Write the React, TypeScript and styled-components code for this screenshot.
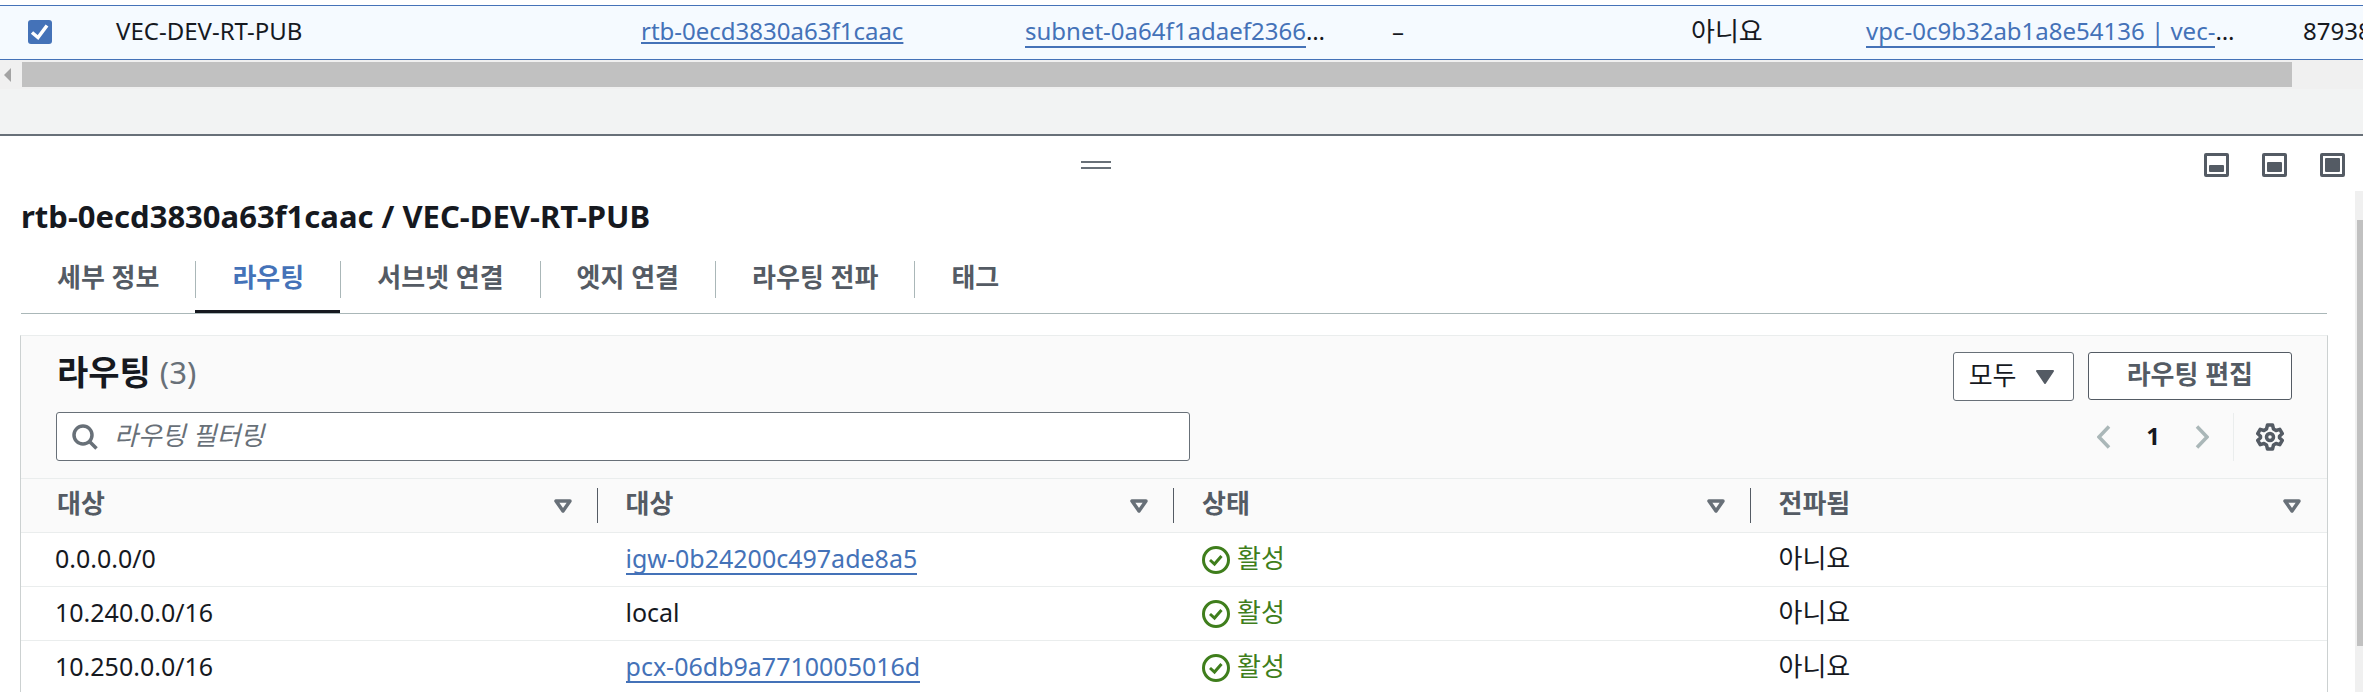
import React from 'react';
import styled, { createGlobalStyle } from 'styled-components';

const Global = createGlobalStyle`
  *, *::before, *::after { box-sizing: border-box; }
  html, body { margin: 0; overflow: hidden; }
  body, button, input, select {
    font-family: 'Noto Sans', 'Noto Sans CJK KR', sans-serif;
    font-size: 26px;
    line-height: 36px;
    color: #16191f;
  }
`;

const Page = styled.div`
  display: flex;
  flex-direction: column;
  height: 100vh;
  overflow: hidden;
  background: #f2f3f3;
`;

const ListPane = styled.section`
  flex: none;
  height: 134px;
  overflow: hidden;
  padding-top: 5px;
  background: linear-gradient(#fff 5px, #f2f3f3 5px);
`;

const ListTable = styled.table`
  width: 120%;
  table-layout: fixed;
  border-collapse: collapse;
  background: #f5faff;
`;

const ListCell = styled.td<{ $w?: number; $korean?: boolean }>`
  width: ${(p) => (p.$w ? `${p.$w}px` : 'auto')};
  height: 54px;
  padding: 0 0 4px;
  border: solid #4472b8;
  border-width: 1px 0;
  font-size: ${(p) => (p.$korean ? 26 : 24)}px;
  white-space: nowrap;
`;

const Check = styled.input`
  appearance: none;
  display: block;
  width: 24px;
  height: 24px;
  margin: 3px 0 0 28px;
  border-radius: 3px;
  background: #4472b8
    url("data:image/svg+xml,%3Csvg xmlns='http://www.w3.org/2000/svg' viewBox='0 0 24 24'%3E%3Cpath d='M4 12.500l6 5L19 5.500' fill='none' stroke='white' stroke-width='3.500'/%3E%3C/svg%3E");
`;

const Link = styled.a<{ $boxed?: boolean }>`
  display: inline-block;
  line-height: 30px;
  color: #4472b8;
  text-decoration: ${(p) => (p.$boxed ? 'none' : 'underline')};
  text-decoration-thickness: 2px;
  text-underline-offset: 2px;
  border-bottom: ${(p) => (p.$boxed ? '2px solid #4472b8' : '0')};
`;

const HScroll = styled.div`
  display: flex;
  align-items: center;
  height: 29px;
  padding: 0 71px 0 4px;
  gap: 11px;
  background: #f0f0f0;
`;

const HThumb = styled.div`
  flex: 1;
  height: 25px;
  background: #c1c1c1;
`;

const Split = styled.section`
  flex: 1;
  min-height: 0;
  display: flex;
  flex-direction: column;
  border-top: 2px solid #687078;
  background: #fff;
`;

const SplitBar = styled.div`
  flex: none;
  display: grid;
  grid-template-columns: 1fr auto 1fr;
  align-items: center;
  height: 55px;
  padding: 3px 18px 0 0;
`;

const Handle = styled.button`
  grid-column: 2;
  width: 30px;
  height: 8px;
  margin-right: 154px;
  padding: 0;
  border: solid #687078;
  border-width: 2px 0;
  background: none;
`;

const SizeButtons = styled.div`
  display: flex;
  justify-content: flex-end;
  gap: 33px;
`;

const IconButton = styled.button`
  display: flex;
  padding: 0;
  border: 0;
  background: none;
`;

const Body = styled.div`
  flex: 1;
  min-height: 0;
  display: flex;
`;

const Content = styled.div`
  flex: 1;
  min-width: 0;
  overflow: hidden;
  padding: 4px 27px 0 20px;
`;

const VScroll = styled.div`
  flex: none;
  width: 8px;
  padding: 29px 0 46px 2px;
  background: #f0f0f0;
`;

const VThumb = styled.div`
  height: 100%;
  background: #c1c1c1;
`;

const Title = styled.h1`
  margin: 0 0 0 1px;
  font-size: 31px;
  line-height: 42px;
  font-weight: 700;
`;

const Tabs = styled.div`
  display: flex;
  height: 77px;
  margin: 0 1px;
  padding-top: 14px;
  border-bottom: 1px solid #aab7b8;
`;

const Tab = styled.button<{ $active?: boolean }>`
  display: flex;
  align-items: flex-start;
  height: 62px;
  padding: 0;
  border: 0;
  border-bottom: 3px solid ${(p) => (p.$active ? '#16191f' : 'transparent')};
  background: none;
  color: ${(p) => (p.$active ? '#4472b8' : '#545b64')};
  font-weight: 700;
  span {
    height: 37px;
    margin-top: 10px;
    padding: 0 36px;
    line-height: 32px;
    white-space: nowrap;
  }
  &:not(:first-child) span { border-left: 1px solid #aab7b8; }
`;

const Card = styled.section`
  margin-top: 21px;
  border: 1px solid #ccd1d1;
  border-top-color: #eaeded;
  background: #fafafa;
`;

const CardTop = styled.div`
  display: flex;
  justify-content: space-between;
  align-items: flex-start;
  height: 76px;
  padding: 16px 35px 0 36px;
`;

const CardTitle = styled.h2`
  display: flex;
  gap: 9px;
  margin: 0;
  font-size: 34px;
  line-height: 40px;
  font-weight: 700;
  span { color: #687078; font-weight: 400; font-size: 31px; }
`;

const Actions = styled.div`
  display: flex;
  gap: 14px;
`;

const SelectWrap = styled.label`
  display: flex;
  align-items: center;
  width: 121px;
  height: 49px;
  padding: 0 19px 0 15px;
  border: 1px solid #687078;
  border-radius: 3px;
  background: #fff;
`;

const Select = styled.select`
  appearance: none;
  flex: 1;
  min-width: 0;
  padding: 0 0 4px;
  border: 0;
  background: none;
`;

const EditButton = styled.button`
  height: 48px;
  padding: 0 38px 5px;
  border: 1px solid #545b64;
  border-radius: 3px;
  background: #fff;
  color: #545b64;
  font-weight: 700;
`;

const FilterRow = styled.div`
  display: flex;
  justify-content: space-between;
  height: 66px;
  padding: 0 43px 17px 35px;
`;

const Search = styled.label`
  display: flex;
  align-items: center;
  gap: 16px;
  width: calc(51% - 2px);
  padding-left: 15px;
  border: 1px solid #687078;
  border-radius: 3px;
  background: #fff;
`;

const SearchInput = styled.input`
  flex: 1;
  min-width: 0;
  padding: 0 0 4px;
  border: 0;
  background: none;
  &::placeholder { color: #687078; font-style: italic; opacity: 1; }
`;

const Pager = styled.nav`
  display: flex;
  align-items: center;
  strong { width: 84px; padding-bottom: 2px; text-align: center; font-size: 24px; }
`;

const Settings = styled.div`
  display: flex;
  align-items: center;
  height: 48px;
  margin-left: 24px;
  padding-left: 22px;
  border-left: 1px solid #eaeded;
`;

const Routes = styled.table`
  width: 100%;
  table-layout: fixed;
  border-collapse: collapse;
  background: #fff;
`;

const Th = styled.th`
  height: 54px;
  padding: 0;
  border: solid #eaeded;
  border-width: 1px 0;
  background: #fafafa;
  color: #545b64;
  text-align: left;
  div {
    display: flex;
    align-items: center;
    justify-content: space-between;
    height: 35px;
    padding: 0 25px 0 28px;
    border-right: 1px solid #545b64;
  }
  span { padding-bottom: 5px; }
  &:first-child div { padding-left: 36px; }
  &:last-child div { border-color: transparent; }
`;

const Td = styled.td<{ $korean?: boolean }>`
  height: 54px;
  padding: 0 0 4px 28px;
  border-bottom: 1px solid #eaeded;
  font-size: ${(p) => (p.$korean ? 26 : 25)}px;
  &:first-child { padding-left: 34px; }
`;

const Status = styled.span`
  display: flex;
  align-items: center;
  gap: 7px;
  color: #3f7e1c;
  svg { margin-top: 4px; }
`;

const SizeIcon = ({ top, label }: { top: number; label: string }) => (
  <IconButton aria-label={label}>
    <svg width="25" height="24" viewBox="0 0 25 24">
      <rect x="1.5" y="1.5" width="22" height="21" rx="0.5" fill="#fff" stroke="#545b64" strokeWidth="3" strokeLinejoin="round" />
      <rect x="5" y={top} width="15" height={19 - top} rx="1" fill="#545b64" />
    </svg>
  </IconButton>
);

const Chevron = ({ next }: { next?: boolean }) => (
  <IconButton aria-label={next ? '다음' : '이전'}>
    <svg width="14" height="24" viewBox="0 0 14 24">
      <path d={next ? 'M2 1.500l10 10.500L2 22.500' : 'M12 1.500L2 12l10 10.500'} fill="none" stroke="#aab7b8" strokeWidth="3.500" />
    </svg>
  </IconButton>
);

const columns = ['대상', '대상', '상태', '전파됨'];
const routes = [
  { dest: '0.0.0.0/0', target: 'igw-0b24200c497ade8a5', link: true },
  { dest: '10.240.0.0/16', target: 'local', link: false },
  { dest: '10.250.0.0/16', target: 'pcx-06db9a7710005016d', link: true },
];
const tabs = ['세부 정보', '라우팅', '서브넷 연결', '엣지 연결', '라우팅 전파', '태그'];

export default function App() {
  return (
    <Page>
      <Global />
      <ListPane>
        <ListTable>
          <tbody>
            <tr>
              <ListCell $w={116}><Check type="checkbox" defaultChecked aria-label="VEC-DEV-RT-PUB" /></ListCell>
              <ListCell $w={525}>VEC-DEV-RT-PUB</ListCell>
              <ListCell $w={384}><Link href="#rtb">rtb-0ecd3830a63f1caac</Link></ListCell>
              <ListCell $w={367}><Link $boxed href="#subnet">subnet-0a64f1adaef2366</Link>…</ListCell>
              <ListCell $w={299}>–</ListCell>
              <ListCell $w={175} $korean>아니요</ListCell>
              <ListCell $w={437}><Link $boxed href="#vpc">vpc-0c9b32ab1a8e54136 | vec-</Link>…</ListCell>
              <ListCell>87938</ListCell>
            </tr>
          </tbody>
        </ListTable>
        <HScroll aria-hidden>
          <svg width="7" height="14" viewBox="0 0 7 14"><path d="M7 0v14L0 7z" fill="#a3a3a3" /></svg>
          <HThumb />
        </HScroll>
      </ListPane>
      <Split>
        <SplitBar>
          <Handle aria-label="크기 조정" />
          <SizeButtons>
            <SizeIcon top={12} label="작게" />
            <SizeIcon top={9} label="중간" />
            <SizeIcon top={5} label="크게" />
          </SizeButtons>
        </SplitBar>
        <Body>
          <Content>
            <Title>rtb-0ecd3830a63f1caac / VEC-DEV-RT-PUB</Title>
            <Tabs role="tablist">
              {tabs.map((t, i) => (
                <Tab key={t} role="tab" aria-selected={i === 1} $active={i === 1}><span>{t}</span></Tab>
              ))}
            </Tabs>
            <Card>
              <CardTop>
                <CardTitle>라우팅 <span>(3)</span></CardTitle>
                <Actions>
                  <SelectWrap>
                    <Select aria-label="라우팅 표시"><option>모두</option></Select>
                    <svg width="18" height="14" viewBox="0 0 18 14"><path d="M1 1h16L9 13z" fill="#545b64" stroke="#545b64" strokeWidth="2" strokeLinejoin="round" /></svg>
                  </SelectWrap>
                  <EditButton>라우팅 편집</EditButton>
                </Actions>
              </CardTop>
              <FilterRow>
                <Search>
                  <svg width="26" height="26" viewBox="0 0 26 26" fill="none" stroke="#687078" strokeWidth="3.500">
                    <circle cx="11" cy="11" r="9" /><path d="M17.500 17.500l7 7" />
                  </svg>
                  <SearchInput aria-label="라우팅 필터링" placeholder="라우팅 필터링" />
                </Search>
                <Pager aria-label="페이지">
                  <Chevron /><strong>1</strong><Chevron next />
                  <Settings>
                    <IconButton aria-label="설정">
                      <svg width="28" height="28" viewBox="0 0 28 28" fill="none" stroke="#545b64" strokeWidth="3.500" strokeLinejoin="round">
                        <path d="M11.500 2h5l1 4 2.500 1.500 3.800-1.200 2.500 4.300-2.800 2.700v1.400l2.800 2.700-2.500 4.300-3.800-1.200L17.500 22l-1 4h-5l-1-4L8 20.500l-3.800 1.200-2.500-4.300 2.800-2.700v-1.400L1.700 10.600l2.500-4.300L8 7.500 10.500 6z" />
                        <circle cx="14" cy="14" r="3.500" />
                      </svg>
                    </IconButton>
                  </Settings>
                </Pager>
              </FilterRow>
              <Routes>
                <thead>
                  <tr>
                    {columns.map((c, i) => (
                      <Th key={i} scope="col">
                        <div>
                          <span>{c}</span>
                          <svg width="18" height="14" viewBox="0 0 18 14"><path d="M2 2h14L9 12z" fill="none" stroke="#687078" strokeWidth="3.500" strokeLinejoin="round" /></svg>
                        </div>
                      </Th>
                    ))}
                  </tr>
                </thead>
                <tbody>
                  {routes.map((r) => (
                    <tr key={r.dest}>
                      <Td>{r.dest}</Td>
                      <Td>{r.link ? <Link $boxed href={`#${r.target}`}>{r.target}</Link> : r.target}</Td>
                      <Td $korean>
                        <Status>
                          <svg width="28" height="28" viewBox="0 0 28 28" fill="none" stroke="#3f7e1c" strokeWidth="3">
                            <circle cx="14" cy="14" r="12.500" /><path d="M8 14l4.500 4L19.500 10" />
                          </svg>
                          활성
                        </Status>
                      </Td>
                      <Td $korean>아니요</Td>
                    </tr>
                  ))}
                </tbody>
              </Routes>
            </Card>
          </Content>
          <VScroll aria-hidden><VThumb /></VScroll>
        </Body>
      </Split>
    </Page>
  );
}
